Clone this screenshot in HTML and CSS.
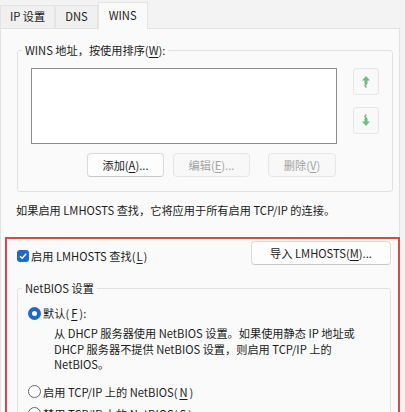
FILE: index.html
```html
<!DOCTYPE html>
<html>
<head>
    <title>WINS 设置</title>
    <meta charset="UTF-8">
    <meta name="viewport" content="width=device-width, initial-scale=1.0">
    <link rel="stylesheet" href="styles.css">
</head>
<body>
    <div class="dialog">
        <div class="tabs">
            <div class="tab">IP 设置</div>
            <div class="tab">DNS</div>
            <div class="tab active">WINS</div>
        </div>

        <div class="panel">
            <fieldset class="group wins-group">
                <legend>WINS 地址，按使用排序(<u>W</u>):</legend>
                <div class="list-row">
                    <div class="listbox"></div>
                    <div class="order-buttons">
                        <button class="icon-btn" title="上移">
                            <svg width="10" height="13" viewBox="0 0 10 13">
                                <path d="M5 1 L9 5.5 H6.5 V8 Q6.5 10 4.5 10.5 Q6 11.5 6 12.5 H4 Q4 11 3 10.5 Q4.5 9.5 3.5 8 V5.5 H1 Z" fill="#6cc07a"/>
                            </svg>
                        </button>
                        <button class="icon-btn" title="下移">
                            <svg width="10" height="13" viewBox="0 0 10 13">
                                <path d="M5 12 L9 7.5 H6.5 V5 Q6.5 3 4.5 2.5 Q6 1.5 6 0.5 H4 Q4 2 3 2.5 Q4.5 3.5 3.5 5 V7.5 H1 Z" fill="#6cc07a"/>
                            </svg>
                        </button>
                    </div>
                </div>
                <div class="actions">
                    <button class="btn add">添加(<u>A</u>)...</button>
                    <button class="btn edit" disabled>编辑(<u>E</u>)...</button>
                    <button class="btn remove" disabled>删除(<u>V</u>)</button>
                </div>
            </fieldset>

            <p class="note">如果启用 LMHOSTS 查找，它将应用于所有启用 TCP/IP 的连接。</p>

            <div class="highlight">
                <div class="lmhosts-row">
                    <label class="check">
                        <span class="checkbox">
                            <svg width="10" height="10" viewBox="0 0 10 10">
                                <path d="M2 5.2 L4.2 7.3 L8.2 2.8" fill="none" stroke="#fff" stroke-width="1.4"/>
                            </svg>
                        </span>
                        启用 LMHOSTS 查找(<u>L</u>)
                    </label>
                    <button class="btn import">导入 LMHOSTS(<u>M</u>)...</button>
                </div>

                <fieldset class="group netbios">
                    <legend>NetBIOS 设置</legend>
                    <label class="radio"><span class="dot checked"></span>默认(<u>F</u>):</label>
                    <p class="desc">从 DHCP 服务器使用 NetBIOS 设置。如果使用静态 IP 地址或 DHCP 服务器不提供 NetBIOS 设置，则启用 TCP/IP 上的 NetBIOS。</p>
                    <label class="radio"><span class="dot"></span>启用 TCP/IP 上的 NetBIOS(<u>N</u>)</label>
                    <label class="radio"><span class="dot"></span>禁用 TCP/IP 上的 NetBIOS(<u>S</u>)</label>
                </fieldset>
            </div>
        </div>
    </div>
</body>
</html>
```

FILE: styles.css
```css
* {
    box-sizing: border-box;
    margin: 0;
    padding: 0;
}

body {
    font-family: 'Noto Sans CJK SC', 'Noto Sans', sans-serif;
    font-size: 11.2px;
    color: #1b1b1b;
    background: #f3f3f3;
    overflow: hidden;
}

u {
    text-decoration: underline;
    text-underline-offset: 2px;
}

.dialog {
    width: 405px;
}

/* tabs */
.tabs {
    display: flex;
    align-items: flex-end;
    height: 28px;
}

.tab {
    height: 23px;
    line-height: 21px;
    padding: 0 9px;
    border: 1px solid #e4e4e4;
    border-bottom: none;
    background: #f0f0f0;
}

.tab.active {
    height: 27px;
    line-height: 25px;
    padding: 0 10px;
    background: #fafafa;
    position: relative;
    top: 1px;
}

/* panel */
.panel {
    width: 400px;
    background: #fafafa;
    border: 1px solid #e2e2e2;
    padding: 14px 6px 0 16px;
}

.group {
    border: 1px solid #e1e1e1;
    border-radius: 3px;
    padding: 0 13px 14px 13px;
}

.group legend {
    padding: 0 3px;
    margin-left: -9px;
    line-height: 14px;
}

.list-row {
    display: flex;
    gap: 16px;
    margin-top: 11px;
}

.listbox {
    width: 306px;
    height: 76px;
    background: #fff;
    border: 1px solid #8c8c8c;
}

.order-buttons {
    display: flex;
    flex-direction: column;
    gap: 12px;
}

.icon-btn {
    width: 26px;
    height: 27px;
    display: flex;
    align-items: center;
    justify-content: center;
    background: #f9f9f9;
    border: 1px solid #e6e6e6;
    border-radius: 3px;
}

.actions {
    display: flex;
    margin-top: 9px;
    padding-left: 56px;
}

.btn {
    font-family: inherit;
    font-size: 11.2px;
    color: #1b1b1b;
    height: 24px;
    background: #fdfdfd;
    border: 1px solid #dadada;
    border-bottom-color: #c8c8c8;
    border-radius: 4px;
}

.btn:disabled {
    color: #a2a2a2;
    background: #f8f8f8;
    border-color: #e6e6e6;
}

.add { width: 77px; }
.edit { width: 77px; margin-left: 9px; }
.remove { width: 68px; margin-left: 18px; }

.note {
    margin: 11px 0 0 -1px;
    line-height: 14px;
}

/* highlighted area */
.highlight {
    margin: 20px -7px 0 -12px;
    border: 2px solid #d24c4c;
    border-bottom: none;
    padding: 2px 7px 30px 10px;
}

.lmhosts-row {
    display: flex;
    justify-content: space-between;
    align-items: flex-start;
}

.check {
    display: flex;
    align-items: center;
    gap: 1px;
    margin-top: 8px;
    line-height: 14px;
}

.checkbox {
    width: 12px;
    height: 12px;
    margin-right: 1px;
    border-radius: 3px;
    background: #1f6ac6;
    display: flex;
    align-items: center;
    justify-content: center;
}

.import {
    width: 140px;
    height: 24px;
}

.netbios {
    margin-top: 16px;
    padding: 0 10px 0 10px;
}

.netbios legend {
    margin-left: -6px;
}

.radio {
    display: flex;
    align-items: center;
    gap: 2px;
    line-height: 16px;
}

.netbios legend + .radio {
    margin-top: 10px;
}

.dot {
    width: 13px;
    height: 13px;
    border: 1px solid #666;
    border-radius: 50%;
    background: #fff;
}

.dot.checked {
    border: 4px solid #1f6ac6;
}

.desc {
    margin: 5px 0 0 26px;
    line-height: 15.5px;
    width: 306px;
}

.desc + .radio {
    margin-top: 11px;
}

.radio + .radio {
    margin-top: 6px;
}
```
